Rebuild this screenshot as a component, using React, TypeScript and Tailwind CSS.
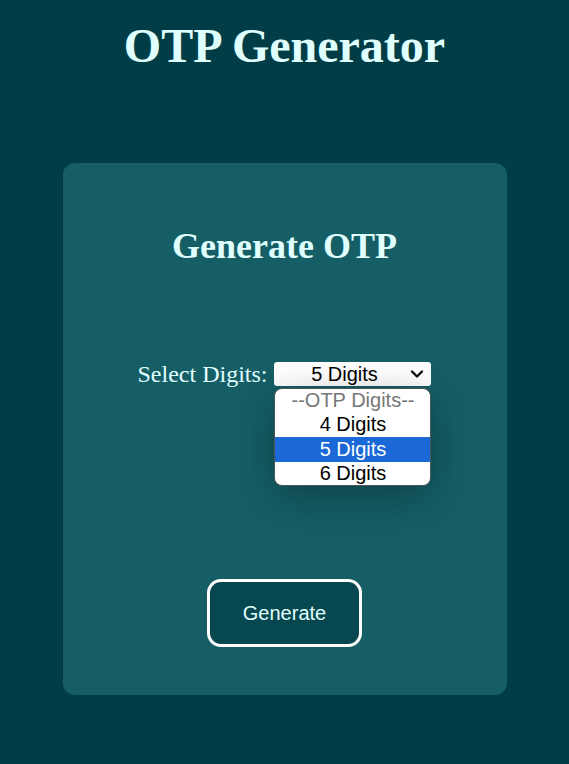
import React from "react";

export default function App() {
  const serif = { fontFamily: '"Liberation Serif", "Times New Roman", serif' };
  const sans = { fontFamily: '"Liberation Sans", Arial, sans-serif' };
  return (
    <div className="min-h-screen w-full bg-[#013d46] flex flex-col items-center">
      <h1
        style={serif}
        className="mt-[18px] text-[48px] leading-[56px] font-bold text-[#e0ffff]"
      >
        OTP Generator
      </h1>
      <div className="mt-[89px] w-[444px] h-[532px] rounded-[12px] bg-[#155e66] flex flex-col items-center">
        <h2
          style={serif}
          className="mt-[63px] text-[36px] leading-[40px] font-bold text-[#e0ffff]"
        >
          Generate OTP
        </h2>
        <div className="mt-[94px] flex items-center gap-[7px]">
          <label style={serif} className="text-[24px] leading-[28px] text-[#e0ffff]">
            Select Digits:
          </label>
          <div className="relative">
            <div
              style={sans}
              className="w-[157px] h-[24px] bg-white rounded-[3px] flex items-center text-[20px] leading-[22px] text-black"
            >
              <span className="flex-1 text-center pl-[4px]">5 Digits</span>
              <svg width="14" height="10" viewBox="0 0 14 10" className="mr-[7px]">
                <path d="M2 2.5 L7 7.5 L12 2.5" stroke="#111" strokeWidth="2.4" fill="none" strokeLinecap="round" strokeLinejoin="round" />
              </svg>
            </div>
            <div
              style={sans}
              className="absolute left-0 top-[26px] w-[157px] bg-white rounded-[8px] border border-[#4a5555] overflow-hidden shadow-[0_10px_40px_rgba(0,0,0,0.3)] text-[20px] leading-[25px]"
            >
              <div className="h-[23px] flex items-center justify-center text-[#777]">--OTP Digits--</div>
              <div className="h-[25px] flex items-center justify-center text-black">4 Digits</div>
              <div className="h-[25px] flex items-center justify-center bg-[#1a69d6] text-white">5 Digits</div>
              <div className="h-[23px] flex items-center justify-center text-black">6 Digits</div>
            </div>
          </div>
        </div>
        <button
          style={sans}
          className="mt-[191px] w-[155px] h-[68px] rounded-[14px] border-[3px] border-white bg-[#07474f] text-[20px] text-[#e0ffff]"
        >
          Generate
        </button>
      </div>
    </div>
  );
}
